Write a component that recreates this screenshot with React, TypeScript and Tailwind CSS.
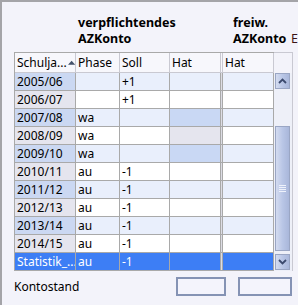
import React from 'react';

type Row = {
  jahr: string;
  phase: string;
  soll: string;
  // Sperrzelle in der ersten "Hat"-Spalte
  locked?: boolean;
};

const rows: Row[] = [
  { jahr: '2005/06', phase: '', soll: '+1' },
  { jahr: '2006/07', phase: '', soll: '+1' },
  { jahr: '2007/08', phase: 'wa', soll: '', locked: true },
  { jahr: '2008/09', phase: 'wa', soll: '', locked: true },
  { jahr: '2009/10', phase: 'wa', soll: '', locked: true },
  { jahr: '2010/11', phase: 'au', soll: '-1' },
  { jahr: '2011/12', phase: 'au', soll: '-1' },
  { jahr: '2012/13', phase: 'au', soll: '-1' },
  { jahr: '2013/14', phase: 'au', soll: '-1' },
  { jahr: '2014/15', phase: 'au', soll: '-1' },
  { jahr: 'Statistik_...', phase: 'au', soll: '-1' },
];

function GridRow({ row, index }: { row: Row; index: number }) {
  const selected = index === rows.length - 1;
  const odd = index % 2 === 0;

  const firstBg = selected ? 'bg-[#3d7ef5]' : odd ? 'bg-[#cbd8f2]' : 'bg-[#e5e5ee]';
  const cellBg = selected ? 'bg-[#3d7ef5]' : odd ? 'bg-[#e9effc]' : 'bg-white';
  const hatBg = selected
    ? 'bg-[#3d7ef5]'
    : row.locked
      ? odd
        ? 'bg-[#c9d8f4]'
        : 'bg-[#e5e5ee]'
      : cellBg;
  const text = selected ? 'text-white' : 'text-black';

  return (
    <div className={`flex h-[18px] border-b border-[#a9a9a9] ${text}`}>
      <div className={`w-[61px] border-r border-[#a9a9a9] pl-[2px] leading-[17px] whitespace-nowrap overflow-hidden ${firstBg}`}>
        {row.jahr}
      </div>
      <div className={`w-[44px] border-r border-[#a9a9a9] pl-[2px] leading-[17px] ${cellBg}`}>{row.phase}</div>
      <div className={`w-[50px] border-r border-[#a9a9a9] pl-[2px] leading-[17px] ${cellBg}`}>{row.soll}</div>
      <div className={`w-[51px] border-r border-[#a9a9a9] ${hatBg}`} />
      <div className="w-[2px] bg-[#dcdce4] border-r border-[#a9a9a9]" />
      <div className={`w-[51px] border-r border-[#a9a9a9] ${cellBg}`} />
    </div>
  );
}

function ScrollButton({ dir }: { dir: 'up' | 'down' }) {
  return (
    <div className="h-[16px] w-[15px] flex items-center justify-center border border-[#9aa6c4] bg-gradient-to-r from-[#d4dcf0] via-[#b9c6e6] to-[#a9b7da]">
      <svg width="9" height="6" viewBox="0 0 9 6">
        <path
          d={dir === 'up' ? 'M1 5 L4.5 1.5 L8 5' : 'M1 1 L4.5 4.5 L8 1'}
          fill="none"
          stroke="#3c4a6e"
          strokeWidth="1.8"
        />
      </svg>
    </div>
  );
}

export default function App() {
  return (
    <div
      className="w-[298px] h-[305px] overflow-hidden bg-[#f3f3fa] border-l-2 border-t-2 border-[#a4a4a8] text-[12px] text-black"
      style={{ fontFamily: '"Noto Sans", "Segoe UI", Arial, sans-serif' }}
    >
      {/* Spaltenüberschriften oben */}
      <div className="flex h-[50px] pt-[13px] font-bold leading-[16px] text-[12.5px]">
        <div className="ml-[76px] w-[155px]">
          verpflichtendes
          <br />
          AZKonto
        </div>
        <div className="w-[58px]">
          freiw.
          <br />
          AZKonto
        </div>
        <div className="pt-[16px] font-normal text-[#3a1414]">E</div>
      </div>

      {/* Tabelle */}
      <div className="flex ml-[12px]">
        <div className="border-l border-t border-[#a9a9a9]">
          <div className="flex h-[20px] border-b border-[#c9c9d2] bg-[#f7f7fc] leading-[19px]">
            <div className="w-[61px] border-r border-[#c9c9d2] pl-[2px] flex items-center gap-[1px] whitespace-nowrap">
              Schulja...
              <svg width="8" height="5" viewBox="0 0 8 5">
                <path d="M0 5 L4 0.5 L8 5 Z" fill="#43526b" />
              </svg>
            </div>
            <div className="w-[44px] border-r border-[#c9c9d2] pl-[2px]">Phase</div>
            <div className="w-[50px] border-r border-[#c9c9d2] pl-[2px]">Soll</div>
            <div className="w-[51px] border-r border-[#c9c9d2] pl-[2px]">Hat</div>
            <div className="w-[2px] border-r border-[#c9c9d2]" />
            <div className="w-[51px] border-r border-[#c9c9d2] pl-[2px]">Hat</div>
          </div>
          {rows.map((row, i) => (
            <GridRow key={row.jahr} row={row} index={i} />
          ))}
        </div>

        {/* Scrollbalken */}
        <div className="flex flex-col w-[19px] border-t border-r border-[#c9c9d2]">
          <div className="h-[20px]" />
          <div className="flex flex-col flex-1 pl-[1px] pb-[1px] bg-[#eef0f8]">
            <ScrollButton dir="up" />
            <div className="h-[37px]" />
            <div className="h-[125px] w-[15px] flex items-center justify-center border border-[#9aa6c4] bg-gradient-to-r from-[#d4dcf0] via-[#b9c6e6] to-[#a9b7da]">
              <div className="flex flex-col gap-[1px] w-[7px]">
                <div className="h-px bg-[#eef2fb]" />
                <div className="h-px bg-[#eef2fb]" />
                <div className="h-px bg-[#eef2fb]" />
                <div className="h-px bg-[#eef2fb]" />
              </div>
            </div>
            <div className="flex-1" />
            <ScrollButton dir="down" />
          </div>
        </div>
      </div>

      {/* Kontostand */}
      <div className="flex items-center mt-[6px] ml-[12px]">
        <div className="w-[162px] leading-[16px]">Kontostand</div>
        <div className="w-[50px] h-[19px] border-2 border-[#8593b4] bg-[#f4f4fc]" />
        <div className="w-[54px] h-[19px] ml-[12px] border-2 border-[#8593b4] bg-[#f4f4fc]" />
      </div>
    </div>
  );
}
